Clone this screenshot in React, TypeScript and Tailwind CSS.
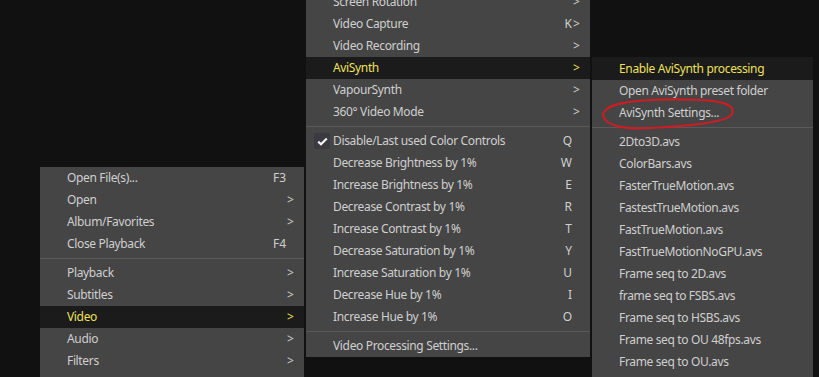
import React from "react";

type Item =
  | { sep: true }
  | { label: string; key?: string; sub?: boolean; active?: boolean; checked?: boolean; sep?: false };

const leftItems: Item[] = [
  { label: "Open File(s)...", key: "F3" },
  { label: "Open", sub: true },
  { label: "Album/Favorites", sub: true },
  { label: "Close Playback", key: "F4" },
  { sep: true },
  { label: "Playback", sub: true },
  { label: "Subtitles", sub: true },
  { label: "Video", sub: true, active: true },
  { label: "Audio", sub: true },
  { label: "Filters", sub: true },
];

const videoItems: Item[] = [
  { label: "Screen Rotation", sub: true },
  { label: "Video Capture", key: "K", sub: true },
  { label: "Video Recording", sub: true },
  { label: "AviSynth", sub: true, active: true },
  { label: "VapourSynth", sub: true },
  { label: "360° Video Mode", sub: true },
  { sep: true },
  { label: "Disable/Last used Color Controls", key: "Q", checked: true },
  { label: "Decrease Brightness by 1%", key: "W" },
  { label: "Increase Brightness by 1%", key: "E" },
  { label: "Decrease Contrast by 1%", key: "R" },
  { label: "Increase Contrast by 1%", key: "T" },
  { label: "Decrease Saturation by 1%", key: "Y" },
  { label: "Increase Saturation by 1%", key: "U" },
  { label: "Decrease Hue by 1%", key: "I" },
  { label: "Increase Hue by 1%", key: "O" },
  { sep: true },
  { label: "Video Processing Settings..." },
];

const aviItems: Item[] = [
  { label: "Enable AviSynth processing", active: true },
  { label: "Open AviSynth preset folder" },
  { label: "AviSynth Settings..." },
  { sep: true },
  { label: "2Dto3D.avs" },
  { label: "ColorBars.avs" },
  { label: "FasterTrueMotion.avs" },
  { label: "FastestTrueMotion.avs" },
  { label: "FastTrueMotion.avs" },
  { label: "FastTrueMotionNoGPU.avs" },
  { label: "Frame seq to 2D.avs" },
  { label: "frame seq to FSBS.avs" },
  { label: "Frame seq to HSBS.avs" },
  { label: "Frame seq to OU 48fps.avs" },
  { label: "Frame seq to OU.avs" },
];

function Menu({ items, arrows = true }: { items: Item[]; arrows?: boolean }) {
  return (
    <div className="flex flex-col">
      {items.map((it, i) =>
        it.sep ? (
          <div key={i} className="h-[7px] flex items-center">
            <div className="h-px w-full bg-[#5a5a5a]" />
          </div>
        ) : (
          <div
            key={i}
            className={`h-[22px] flex items-center ${it.active ? "bg-[#1b1b1b] text-[#eee05a]" : "text-[#cfcfcf]"}`}
          >
            <div className="w-[27px] h-full flex items-center justify-center pl-[5px]">
              {it.checked && (
                <div className="w-[16px] h-[16px] rounded-[2px] bg-[#3a3a40] flex items-center justify-center">
                  <svg width="11" height="9" viewBox="0 0 11 9">
                    <path d="M1.2 4.6 L4 7.3 L9.8 1.4" fill="none" stroke="#f2f2f2" strokeWidth="2.2" />
                  </svg>
                </div>
              )}
            </div>
            <span className="flex-1 whitespace-nowrap tracking-[-0.35px]">{it.label}</span>
            {it.key && <span>{it.key}</span>}
            {arrows && <span className="w-[18px] pl-[1px]">{it.sub ? ">" : ""}</span>}
          </div>
        )
      )}
    </div>
  );
}

export default function App() {
  return (
    <div
      className="relative w-[819px] h-[377px] overflow-hidden bg-[#111111] text-[12px] leading-none"
      style={{ fontFamily: '"Segoe UI", "Noto Sans", sans-serif' }}
    >
      <div className="absolute left-[40px] top-[167px] w-[264px] bg-[#454545] pb-[20px]">
        <Menu items={leftItems} />
      </div>

      <div className="absolute left-[306px] top-[-9px] w-[284px] bg-[#454545]">
        <Menu items={videoItems} />
      </div>

      <div className="absolute left-[592px] top-[57px] w-[221px] bg-[#454545] border-t border-[#1b1b1b] pb-[20px]">
        <Menu items={aviItems} arrows={false} />
      </div>

      <svg className="absolute left-0 top-0" width="819" height="377" viewBox="0 0 819 377">
        <path
          d="M607 109 C612 101, 660 98, 700 100 C725 101, 736 106, 732 114 C728 122, 690 126, 650 128 C620 130, 604 124, 603 115 C603 109, 615 104, 625 103"
          fill="none"
          stroke="#c81e24"
          strokeWidth="2.2"
          strokeLinecap="round"
        />
      </svg>
    </div>
  );
}
